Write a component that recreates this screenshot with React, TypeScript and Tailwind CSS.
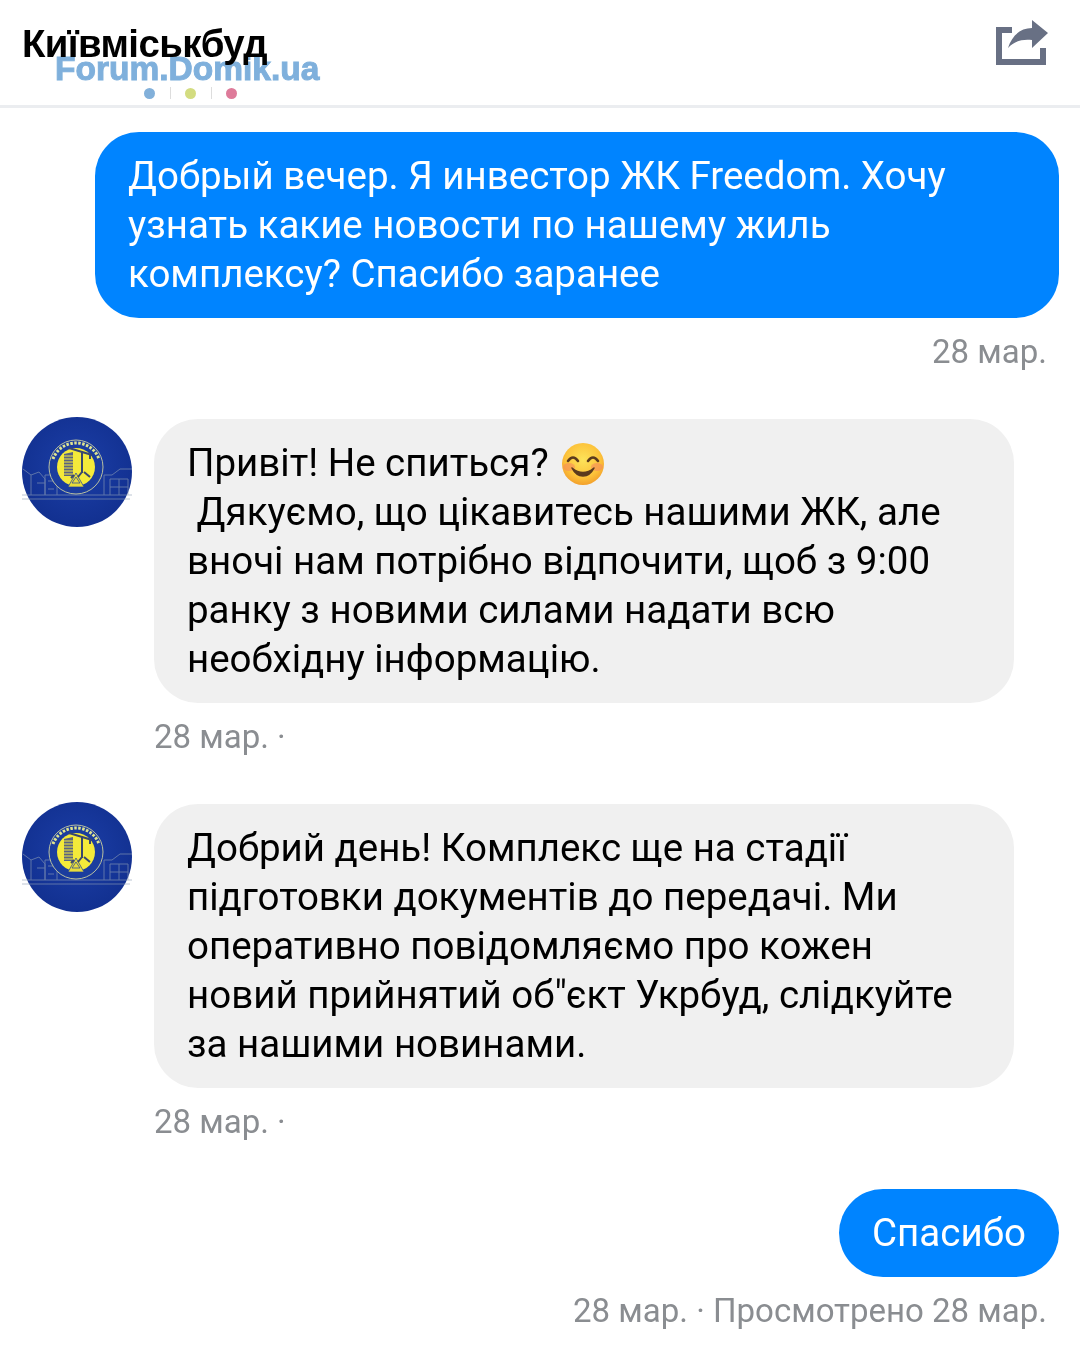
import React from "react";

function Avatar() {
  return (
    <svg width="110" height="110" viewBox="0 0 110 110" className="shrink-0">
      <defs>
        <radialGradient id="bg" cx="50%" cy="45%" r="60%">
          <stop offset="0%" stopColor="#1c3fa8" />
          <stop offset="100%" stopColor="#112f8e" />
        </radialGradient>
      </defs>
      <circle cx="55" cy="55" r="55" fill="url(#bg)" />
      <g fill="none" stroke="#8f9fb5" strokeWidth="1" opacity="0.6">
        <path d="M0 78H110M0 82H108" />
        <path d="M1 52l8 6 8-3 6 7v16M9 58v20M15 66h8" />
        <path d="M23 78V58h7l1-2h4v22M26 64h6M26 72h6" />
        <path d="M82 78V58h8l8-6h12M88 78V62h18v16M97 62v16M88 70h18" />
      </g>
      <circle cx="54" cy="50" r="27" fill="#1b3d9e" stroke="#b9c0a0" strokeWidth="1" />
      <circle cx="54" cy="50" r="19" fill="#f4ea3a" />
      <path d="M42 37l9-2v24h-9z" fill="#5a6480" />
      <path d="M42 39h9M42 42h9M42 45h9M42 48h9M42 51h9M42 54h9M42 57h9" stroke="#f4ea3a" strokeWidth="1" />
      <path d="M47 31l23 7M60 34v22M68 38v4" stroke="#39476f" strokeWidth="2" fill="none" />
      <path d="M46 70l8-14 8 14zM50 66l4-6 4 6z" fill="#e8dc3a" stroke="#1b3d9e" strokeWidth="0.7" />
      <path d="M52 58l-3 3M60 55l-4 5M62 55l6 5" stroke="#39476f" strokeWidth="2" />
      <path d="M31 42A24.5 24.5 0 0 1 77 42" fill="none" stroke="#dfe48f" strokeWidth="3" strokeDasharray="2.5 1.5" />
    </svg>
  );
}

function Smile() {
  return (
    <svg width="46" height="44" viewBox="0 0 46 44" className="inline-block align-[-10px] ml-[11px]">
      <defs>
        <radialGradient id="face" cx="50%" cy="40%" r="60%">
          <stop offset="0%" stopColor="#fde35a" />
          <stop offset="70%" stopColor="#fcc23a" />
          <stop offset="100%" stopColor="#f3a02c" />
        </radialGradient>
      </defs>
      <circle cx="23" cy="22" r="21" fill="url(#face)" />
      <ellipse cx="9" cy="25" rx="6" ry="4" fill="#f58a5c" opacity="0.6" />
      <ellipse cx="37" cy="25" rx="6" ry="4" fill="#f58a5c" opacity="0.6" />
      <path d="M8 19q5-7 10 0M28 19q5-7 10 0" stroke="#5b3a1e" strokeWidth="2.6" fill="none" strokeLinecap="round" />
      <path d="M12 26q11 9 22 0q-4 8-11 8t-11-8z" fill="#5b3a1e" stroke="#5b3a1e" strokeWidth="1.5" strokeLinejoin="round" />
    </svg>
  );
}

function Incoming({ children, meta }: { children: React.ReactNode; meta: string }) {
  return (
    <div className="flex flex-col">
      <div className="flex items-start pl-[22px]">
        <div className="-mt-[2px]"><Avatar /></div>
        <div className="ml-[22px] w-[860px] rounded-[44px] bg-[#f0f0f0] pl-[33px] pr-[20px] pt-[19px] pb-[20px] text-black">
          {children}
        </div>
      </div>
      <div className="mt-[9px] pl-[154px] text-[33px] leading-[49px] text-[#8a8d91]">{meta}</div>
    </div>
  );
}

export default function App() {
  return (
    <div className="relative w-[1080px] h-[1352px] overflow-hidden bg-white text-[38.5px] leading-[49px] [font-family:Roboto,sans-serif]">
      <header className="flex h-[108px] items-start justify-between border-b-[3px] border-[#ebedf0] pl-[22px] pr-[32px]">
        <h1 className="mt-[23px] text-[38.4px] leading-[42px] font-bold tracking-[-0.6px] text-black [font-family:'Liberation_Sans',sans-serif]">Київміськбуд</h1>
        <svg width="54" height="48" viewBox="0 0 54 48" className="mt-[19px]">
          <path d="M18 11H5V43H49V29" fill="none" stroke="#687084" strokeWidth="6" />
          <path d="M14 29C18 16 27 9 38 9V1L54 14 38 29V21C28 20 20 22 14 29Z" fill="#687084" />
        </svg>
      </header>

      <div className="absolute left-[55px] top-[50px] flex flex-col items-start pointer-events-none mix-blend-multiply">
        <div className="text-[33.5px] leading-[38px] font-bold text-[#7fb0dc] [-webkit-text-stroke:1px_#7fb0dc] [font-family:'Liberation_Sans',sans-serif]">Forum.Domik.ua</div>
        <div className="mt-[-1px] ml-[89px] flex items-center">
          <span className="h-[11px] w-[11px] rounded-full bg-[#82b0da]" />
          <span className="ml-[15px] h-[12px] w-px bg-[#dddddd]" />
          <span className="ml-[14px] h-[11px] w-[11px] rounded-full bg-[#d3dc80]" />
          <span className="ml-[15px] h-[12px] w-px bg-[#dddddd]" />
          <span className="ml-[14px] h-[11px] w-[11px] rounded-full bg-[#de7b9a]" />
        </div>
      </div>

      <main className="flex flex-col pt-[24px]">
        <div className="flex flex-col items-end pr-[21px]">
          <div className="w-[964px] rounded-[44px] bg-[#0084ff] pl-[33px] pr-[20px] pt-[19px] pb-[20px] text-white">
            Добрый вечер. Я инвестор ЖК Freedom. Хочу<br />
            узнать какие новости по нашему жиль<br />
            комплексу? Спасибо заранее
          </div>
          <div className="mt-[9px] pr-[12px] text-[33px] leading-[49px] text-[#8a8d91]">28 мар.</div>
        </div>

        <div className="mt-[43px]">
          <Incoming meta="28 мар. ·">
            Привіт! Не спиться?<Smile /><br />
            &nbsp;Дякуємо, що цікавитесь нашими ЖК, але<br />
            вночі нам потрібно відпочити, щоб з 9:00<br />
            ранку з новими силами надати всю<br />
            необхідну інформацію.
          </Incoming>
        </div>

        <div className="mt-[43px]">
          <Incoming meta="28 мар. ·">
            Добрий день! Комплекс ще на стадії<br />
            підготовки документів до передачі. Ми<br />
            оперативно повідомляємо про кожен<br />
            новий прийнятий об"єкт Укрбуд, слідкуйте<br />
            за нашими новинами.
          </Incoming>
        </div>

        <div className="mt-[43px] flex flex-col items-end pr-[21px]">
          <div className="w-[220px] rounded-[44px] bg-[#0084ff] pt-[19px] pb-[20px] text-center text-white">Спасибо</div>
          <div className="mt-[9px] pr-[12px] text-[33px] leading-[49px] text-[#8a8d91]">28 мар. · Просмотрено 28 мар.</div>
        </div>
      </main>
    </div>
  );
}
